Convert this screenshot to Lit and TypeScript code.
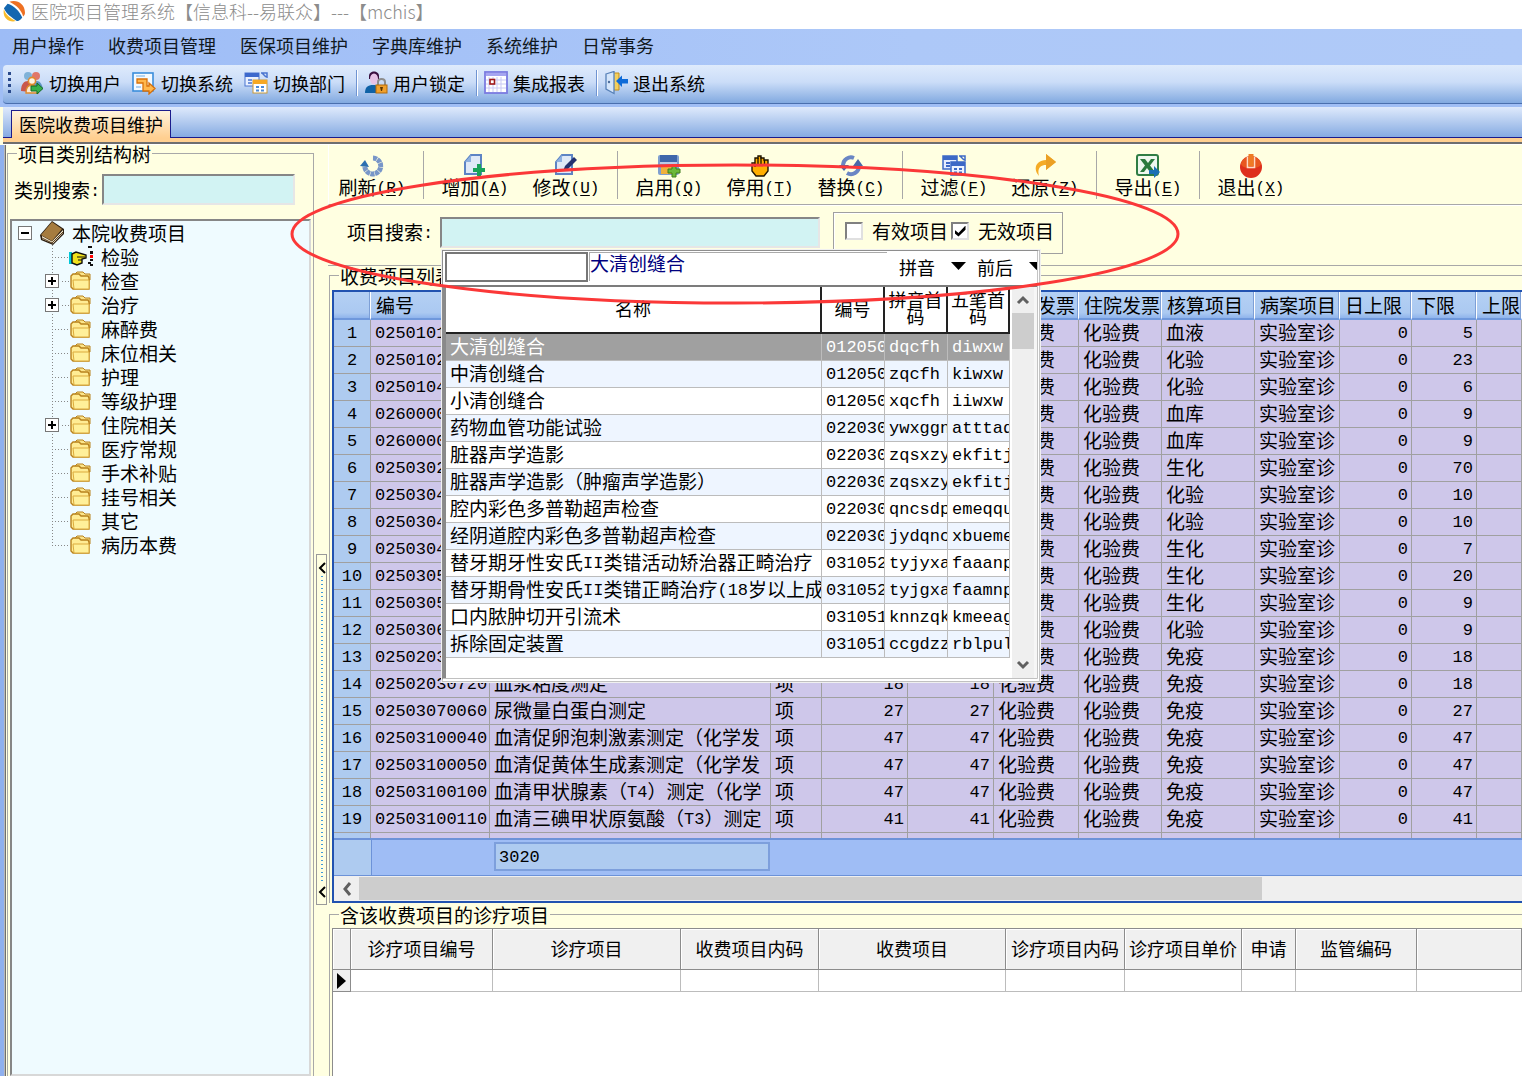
import { LitElement, html, css, svg, nothing } from "lit";
import { customElement, property } from "lit/decorators.js";

/* Wraps runs of half-width characters so they use the monospaced face. */
const mix = (text: string) =>
  text
    .split(/([\x21-\x7e]+)/)
    .filter((s) => s)
    .map((s) => (/^[\x21-\x7e]/.test(s) ? html`<span class="lat">${s}</span>` : s));

const ICONS: Record<string, unknown> = {
  switchUser: svg`<circle cx="8" cy="5" r="4" fill="#7fb2d8"/><circle cx="16" cy="5" r="4" fill="#e0776a"/>
    <path d="M1 20c0-7 3-10 7-10s5 3 5 6l-3 5z" fill="#c9574c"/><path d="M12 14c1-3 3-4 5-4 3 0 5 3 6 8l-6 1z" fill="#5f94c4"/>
    <circle cx="12" cy="10" r="3.6" fill="#fff3e0" stroke="#e08a2c" stroke-width="1.6"/>
    <path d="M6 22c0-5 2-8 6-8s5 3 6 8z" fill="#fbe9d4" stroke="#e08a2c" stroke-width="1.4"/>
    <path d="M11 15h6v-3l6 5.500-6 5.500v-3h-6z" fill="#37b04a" stroke="#136b25"/>`,
  switchSystem: svg`<rect x="1" y="2" width="20" height="18" fill="#f4faff" stroke="#3b8edb" stroke-width="1.6"/>
    <path d="M4 5h9M4 16h5" stroke="#9cc6ee" stroke-width="1.4"/>
    <path d="M5 8h10v7h2v-3l6 5.500-6 5.500v-3h-6v-8H5z" fill="#ffb84d" stroke="#d8700a" stroke-width="1.300"/>`,
  switchDept: svg`<rect x="1" y="2" width="14" height="13" fill="#e9f0ff" stroke="#4a74cf"/><rect x="1" y="2" width="14" height="4" fill="#3c68cc"/>
    <path d="M4 9h4M4 12h4" stroke="#4a74cf" stroke-width="1.500"/><path d="M17 2h6v5M18 2l4 4" stroke="#4a74cf" stroke-width="1.500" fill="none"/>
    <rect x="9" y="9" width="14" height="13" fill="#fff" stroke="#c99a3a"/><rect x="9" y="9" width="14" height="4" fill="#f6a823"/>
    <path d="M12 15h3v2h-3zM17 15h3v2h-3zM12 18.500h3v2h-3zM17 18.500h3v2h-3z" fill="#4a8ad8"/>`,
  lockUser: svg`<path d="M5 5c0-6 10-6 10 0v3H5z" fill="#3a1040"/><ellipse cx="10" cy="8" rx="4" ry="5.500" fill="#e6c2e6"/>
    <path d="M1 22c0-6 3-8 8-8s9 2 9 8z" fill="#0f62a6"/><path d="M14 14v-3c0-4 7-4 7 0v3" fill="none" stroke="#8d8d8d" stroke-width="2"/>
    <rect x="12" y="14" width="11" height="8" fill="#f0a02c" stroke="#b36b08"/><path d="M16 16h3l-1 4h-1z" fill="#5c3500"/>`,
  report: svg`<rect x="1" y="1" width="22" height="21" fill="#fff" stroke="#7b7be0" stroke-width="1.800"/><rect x="2" y="2" width="20" height="3" fill="#a5a5f0"/>
    <path d="M5 6v15M9 6v15M13 6v15M17 6v15M2 9h20M2 13h20M2 17h20" stroke="#c9c9f4"/><rect x="6" y="8.500" width="4.500" height="4.500" fill="#fff" stroke="#a01818" stroke-width="1.600"/>`,
  exitDoor: svg`<path d="M9 2h6v17H9z" fill="#f4cf5c" stroke="#c28e1c"/><path d="M2 3l8-2.500v22L2 18z" fill="#d4e5fa" stroke="#5781b8" stroke-width="1.300"/>
    <circle cx="5" cy="11" r="1.200" fill="#4d6d9c"/><path d="M12 10l6-5.500v3.500h6v4.500h-6V16z" fill="#0d6ad8"/>`,
  refresh: svg`<path d="M13 4a8 8 0 1 1-8 6" fill="none" stroke="#7896c8" stroke-width="5" stroke-dasharray="4 0.600"/><path d="M0 12l5-6 4 7z" fill="#2c6fb0"/>`,
  add: svg`<path d="M8 1h10v19H2V8z" fill="#dfe9f7" stroke="#5d84c4" stroke-width="2"/><path d="M8 1v7H2z" fill="#8db0e0"/><path d="M14 10h4v4h4v4h-4v4h-4v-4h-4v-4h4z" fill="#19a35a"/>`,
  edit: svg`<path d="M8 1h10v19H2V8z" fill="#dfe9f7" stroke="#5d84c4" stroke-width="2"/><path d="M8 1v7H2z" fill="#8db0e0"/><path d="M9 17l2-5L20 3l3 3-9 9z" fill="#24326e"/>`,
  enable: svg`<rect x="1" y="1" width="21" height="20" rx="2" fill="#7f9fd0"/><rect x="3" y="1" width="17" height="9" fill="#3f67aa"/><path d="M3 8h17v2H3z" fill="#b9cbe8"/><rect x="4" y="11" width="13" height="9" fill="#f0b13c"/>
    <path d="M15 11h4v4h4v4h-4v4h-4v-4h-4v-4h4z" fill="#6cb83a" stroke="#3f7f1d"/>`,
  hand: svg`<path d="M8 22L4 17V9h3v4V4h3V2h3v2h3v2h4v11l-4 5z" fill="#ffae00" stroke="#201400" stroke-width="1.400"/><path d="M10 4v8M13 3v9M16.500 6v6" stroke="#201400" stroke-width="1.300"/>`,
  replace: svg`<path d="M4 11a8 8 0 0 1 11-7M20 12a8 8 0 0 1-12 7" fill="none" stroke="#6a86c4" stroke-width="4"/><path d="M0 11h10l-5 6zM14 12h10l-5-7z" fill="#4b68a8"/>`,
  filter: svg`<rect x="1" y="2" width="14" height="13" fill="#e4edff" stroke="#3d69c6" stroke-width="1.500"/><rect x="1" y="2" width="14" height="4" fill="#3d69c6"/>
    <path d="M4 9h4M4 12h4" stroke="#3d69c6" stroke-width="2"/><path d="M17 2h6v5M18 2l4 4" stroke="#3d69c6" stroke-width="1.500" fill="none"/>
    <rect x="9" y="8" width="14" height="13" fill="#eef4ff" stroke="#3d69c6" stroke-width="1.500"/><rect x="9" y="8" width="14" height="4" fill="#3d69c6"/>
    <path d="M12 14h3v2h-3zM17 14h3v2h-3zM12 17.500h3v2h-3zM17 17.500h3v2h-3z" fill="#3d69c6"/>`,
  restore: svg`<path d="M6 22C-1 14 4 6 13 6V0l10 8-10 8v-5c-6 0-9 4-7 11z" fill="#f5ab26"/><path d="M13 0l10 8-10 8z" fill="#eba024"/>`,
  excel: svg`<rect x="1" y="1" width="21" height="20" rx="2" fill="#eef7ee" stroke="#2f7d44" stroke-width="2"/><path d="M4 5h5l3 4 3-4h4l-5 6.500 5 6.500h-5l-3-4-3 4H4l5-6.500z" fill="#2a7a3c"/>
    <path d="M13 16h5v-4l6 6-6 6v-4h-5z" fill="#1a6fb5"/>`,
  power: svg`<circle cx="12" cy="13" r="11" fill="#de2f1c"/><path d="M2 9a11 11 0 0 1 20 0c1 7-21 7-20 0z" fill="#e8561f"/><path d="M8.500 3v10.500h7V3" fill="none" stroke="#ffd9c4" stroke-width="1.600"/><rect x="9.500" y="0" width="5" height="12" fill="#ee7a24"/>`,
  folder: svg`<path d="M6 5l2-2h6l2 2h5v6H6z" fill="#fbe48a" stroke="#b8811c"/><path d="M2 7l2-2h6l2 2h7l1 2v11H4l-2-2z" fill="#ffec94" stroke="#b8811c" stroke-width="1.400"/><path d="M4 11h16v9H5z" fill="#fff09a" stroke="#dcab3c"/>`,
  book: svg`<path d="M0 14L12 0l12 8v5L13 24 1 19z" fill="#2a1d10"/><path d="M1 14L12 1l10 7-10 12z" fill="#a67c3f"/><path d="M2 15l10 5.500L23 9v3L13 22.500 2 18z" fill="#f6ead0"/><path d="M2 17l10 5L23 11" stroke="#5a4020" fill="none"/>`,
  point: svg`<path d="M0 7h3v12H0z" fill="#00c8d8"/><path d="M3 9l4-2 10 3v3l-4 1v4l-5 2-5-2z" fill="#f2e21c" stroke="#111" stroke-width="1.400"/><path d="M8 12h8M9 15h4" stroke="#111"/>
    <path d="M19 1h4v2h-4zM21 6h3v3h-3zM19 17h3v2h-3zM21 19h3v2h-3zM21 14h3v2h-3z" fill="#111"/><path d="M21 10h3v3h-3z" fill="#f00"/>`,
  brand: svg`<path d="M5 4C12 6 18 12 21 19c-2 3-4 4-6 4C10 19 4 16 1 9z" fill="#1467b0"/><path d="M7 2C15-1 24 4 24 14c0 2-1 3-2 4C20 11 15 6 7 2z" fill="#ee7022"/><path d="M1 10c2 6 6 9 13 13C6 25-1 19 1 10z" fill="#f7bb2c"/>`,
};

@customElement("app-icon")
class AppIcon extends LitElement {
  static styles = css`
    :host { display: block; flex: none; width: 24px; height: 24px; }
    .i { display: block; width: 100%; height: 100%; }
  `;
  @property() name = "";
  render() {
    return html`<svg class="i" viewBox="0 0 24 24" aria-hidden="true">${ICONS[this.name] ?? nothing}</svg>`;
  }
}

const MENUS = ["用户操作", "收费项目管理", "医保项目维护", "字典库维护", "系统维护", "日常事务"];

const TOOLS = [
  ["switchUser", "切换用户"], ["switchSystem", "切换系统"], ["switchDept", "切换部门"], null,
  ["lockUser", "用户锁定"], null, ["report", "集成报表"], null, ["exitDoor", "退出系统"],
] as (string[] | null)[];

const ACTIONS = [
  ["refresh", "刷新", "R"], null, ["add", "增加", "A"], ["edit", "修改", "U"], null,
  ["enable", "启用", "Q"], ["hand", "停用", "T"], ["replace", "替换", "C"], null,
  ["filter", "过滤", "F"], ["restore", "还原", "Z"], null, ["excel", "导出", "E"], null, ["power", "退出", "X"],
] as (string[] | null)[];

const TREE: [string, string, boolean][] = [
  ["检验", "point", false], ["检查", "folder", true], ["治疗", "folder", true], ["麻醉费", "folder", false],
  ["床位相关", "folder", false], ["护理", "folder", false], ["等级护理", "folder", false], ["住院相关", "folder", true],
  ["医疗常规", "folder", false], ["手术补贴", "folder", false], ["挂号相关", "folder", false], ["其它", "folder", false],
  ["病历本费", "folder", false],
];

/* code, name, accounting item, price */
const ITEMS: [string, string, string, string][] = [
  ["0250101", "", "血液", "5"], ["0250102", "", "化验", "23"], ["0250104", "", "化验", "6"],
  ["0260000", "", "血库", "9"], ["0260000", "", "血库", "9"], ["0250302", "", "生化", "70"],
  ["0250304", "", "化验", "10"], ["0250304", "", "化验", "10"], ["0250304", "", "生化", "7"],
  ["0250305", "", "生化", "20"], ["0250305", "", "生化", "9"], ["0250306", "", "化验", "9"],
  ["0250203", "", "免疫", "18"], ["02502030720", "血浆粘度测定", "免疫", "18"],
  ["02503070060", "尿微量白蛋白测定", "免疫", "27"],
  ["02503100040", "血清促卵泡刺激素测定（化学发", "免疫", "47"],
  ["02503100050", "血清促黄体生成素测定（化学发", "免疫", "47"],
  ["02503100100", "血清甲状腺素（T4）测定（化学", "免疫", "47"],
  ["02503100110", "血清三碘甲状原氨酸（T3）测定", "免疫", "41"],
];

const MATCHES = [
  ["大清创缝合", "012050", "dqcfh", "diwxw"], ["中清创缝合", "012050", "zqcfh", "kiwxw"],
  ["小清创缝合", "012050", "xqcfh", "iiwxw"], ["药物血管功能试验", "022030", "ywxggn", "atttad"],
  ["脏器声学造影", "022030", "zqsxzy", "ekfitj"], ["脏器声学造影（肿瘤声学造影）", "022030", "zqsxzy", "ekfitj"],
  ["腔内彩色多普勒超声检查", "022030", "qncsdp", "emeqqu"], ["经阴道腔内彩色多普勒超声检查", "022030", "jydqnc", "xbueme"],
  ["替牙期牙性安氏II类错活动矫治器正畸治疗", "031052", "tyjyxa", "faaanp"],
  ["替牙期骨性安氏II类错正畸治疗(18岁以上成", "031052", "tyjgxa", "faamnp"],
  ["口内脓肿切开引流术", "031051", "knnzqk", "kmeeag"], ["拆除固定装置", "031051", "ccgdzz", "rblpul"],
];

const DETAIL_HEADS = ["诊疗项目编号", "诊疗项目", "收费项目内码", "收费项目", "诊疗项目内码", "诊疗项目单价", "申请", "监管编码", ""];

@customElement("app-root")
class AppRoot extends LitElement {
  static styles = css`
    :host {
      display: flex; flex-direction: column; height: 100vh; overflow: hidden; position: relative;
      background: #ffffe1; color: #000;
      font: 19px/24px "Noto Sans CJK SC", sans-serif;
    }
    * { box-sizing: border-box; }
    .lat { font-family: "Liberation Mono", monospace; font-size: 17px; line-height: 0; vertical-align: 2px; }
    button, input, select { font: inherit; color: inherit; margin: 0; padding: 0; border: 0; border-radius: 0; background: none; }
    button { cursor: pointer; }
    ul { list-style: none; margin: 0; padding: 0; }
    table { border-collapse: separate; border-spacing: 0; table-layout: fixed; width: 100%; }
    th, td { padding: 0; font-weight: 400; overflow: hidden; white-space: nowrap; }

    .title { flex: none; display: flex; align-items: flex-start; gap: 6px; height: 29px; padding: 0 3px; background: #fff; color: #8c8c8c; font-size: 18px; line-height: 22px; font-weight: 300; margin: 0; }
    .title app-icon { width: 22px; height: 22px; }
    .menu { flex: none; display: flex; align-items: center; gap: 24px; height: 36px; padding: 0 12px 4px; background: linear-gradient(90deg, #9dbcf6, #adc8f8 60%, #b0caf8); font-size: 18px; }
    .menu a { color: #101820; text-decoration: none; }
    .strip { flex: none; background: #a0bef5; padding: 0 0 3px 3px; }
    .tools { display: flex; align-items: center; gap: 6px; height: 39px; padding: 0 0 2px 5px; border-radius: 4px 0 0 4px; border-bottom: 1px solid #4a6fae; background: linear-gradient(#dfebfc, #cbddf8 45%, #82a9e0); font-size: 18px; }
    .grip { width: 3px; height: 22px; margin-right: 3px; background: repeating-linear-gradient(#2a4a8c 0 3px, transparent 3px 6px); }
    .tool { display: flex; align-items: center; gap: 5px; padding-right: 5px; white-space: nowrap; line-height: 22px; }
    .bar { width: 2px; height: 26px; background: #6f94d2; border-right: 1px solid #fff; }
    .tabs { flex: none; display: flex; align-items: flex-end; height: 31px; padding-left: 8px; margin-left: 3px; background: linear-gradient(#dfeafc, #86abe2); border-bottom: 1px solid #1c1c8c; }
    .tab { height: 28px; padding: 0 7px; margin-bottom: -1px; border: 1px solid #1c1c8c; border-bottom: 0; background: linear-gradient(#fff3dc, #ffcf90); font-size: 18px; line-height: 27px; }
    .under { flex: none; height: 7px; margin-left: 3px; background: linear-gradient(#ffcf90 0 4px, #6e6e6e 4px 6px, #fff 6px); }

    .body { flex: 1; min-height: 0; display: flex; background: #ffffe1; }
    .edge { flex: none; width: 7px; background: linear-gradient(90deg, #8fb0ee 0 4px, #b8b8b8 4px 5px, #6e6e6e 5px 6px, #ffffe1 6px); }
    fieldset { margin: 0; padding: 0; min-width: 0; border: 1px solid #a8a8a8; }
    legend { padding: 0 1px; margin-left: 9px; line-height: 17px; }
    .left { flex: none; width: 307px; display: flex; }
    .left fieldset { flex: 1; display: flex; flex-direction: column; border-bottom: 0; }
    .leftbody { display: flex; flex-direction: column; height: 100%; padding: 0 2px; }
    .find { display: flex; align-items: center; gap: 2px; height: 57px; padding: 0 16px 2px 4px; white-space: nowrap; }
    .box { background: #d2f3f3; border: 2px solid; border-color: #868686 #e6e6e6 #e6e6e6 #868686; height: 31px; min-width: 0; outline: 0; }
    .find .box { flex: 1; }
    .tree { flex: 1; background: #effbff; border: 2px solid; border-color: #868686 #d8d8d8 #d8d8d8 #868686; padding: 0 0 0 6px; line-height: 22px; }
    .node { display: flex; align-items: center; height: 24px; gap: 8px; }
    .kids { margin-left: 34px; background: repeating-linear-gradient(#888 0 1px, transparent 1px 3px) 0 0 / 1px calc(100% - 12px) no-repeat; }
    .kids .lead { width: 17px; height: 1px; margin-right: -8px; background: repeating-linear-gradient(90deg, #888 0 1px, transparent 1px 3px); }
    .kids .toggle { margin: 0 -5px 0 -7px; }
    .kids .toggle + .lead { width: 7px; }
    .toggle { flex: none; width: 14px; height: 14px; border: 1px solid #777; background: linear-gradient(#000, #000) 50% 50% / 8px 2px no-repeat, #fff; }
    .toggle.plus { background: linear-gradient(#000, #000) 50% 50% / 8px 2px no-repeat, linear-gradient(#000, #000) 50% 50% / 2px 8px no-repeat, #fff; }

    .split { flex: none; width: 14px; display: flex; flex-direction: column; align-items: center; justify-content: flex-end; padding: 0 1px 171px 2px; }
    .handle { width: 11px; height: 351px; display: flex; flex-direction: column; align-items: center; justify-content: space-between; padding: 7px 0 6px; border: 1px solid #9a9a9a; }
    .handle svg { display: block; flex: none; width: 8px; height: 12px; }
    .dots { flex: 1; width: 2px; margin: 2px 0; background: repeating-linear-gradient(#3f9adb 0 1px, transparent 1px 4px); }

    .right { flex: 1; min-width: 0; display: flex; flex-direction: column; }
    .actions { flex: none; display: flex; align-items: center; gap: 5px; height: 60px; border-bottom: 1px solid #a8a8a8; border-left: 1px solid #fff; box-shadow: 0 1px #fff; }
    .action { display: flex; flex-direction: column; align-items: center; width: 86px; white-space: nowrap; line-height: 18px; }
    .action .lat { font-size: 16px; }
    .action u { text-underline-offset: 2px; }
    .rule { width: 7px; height: 48px; background: linear-gradient(#a8a8a8, #a8a8a8) 50% 0 / 1px 100% no-repeat; }
    .query { flex: none; position: relative; display: flex; align-items: flex-start; height: 61px; padding: 7px 0 0 19px; border-bottom: 1px solid #a8a8a8; }
    .query > label { line-height: 40px; width: 93px; white-space: nowrap; }
    .combo { position: relative; flex: none; width: 380px; padding-top: 5px; }
    .combo > .box { width: 100%; }
    .flags { display: flex; align-items: center; gap: 3px; height: 42px; margin-left: 13px; padding: 0 8px 4px 11px; border: 1px solid #a0a0a0; box-shadow: inset 1px 1px #fff; white-space: nowrap; }
    .flags label { display: flex; align-items: center; gap: 9px; }
    .check { appearance: none; width: 18px; height: 18px; background: #fff; border: 2px solid; border-color: #808080 #e0e0e0 #e0e0e0 #808080; display: grid; place-items: center; }
    .check:checked::before { content: ""; width: 11px; height: 11px; background: #000; clip-path: polygon(0 38%, 36% 68%, 100% 0, 100% 38%, 36% 100%, 0 70%); }
    .ring { position: absolute; z-index: 5; left: -38px; top: -42px; width: 890px; height: 142px; pointer-events: none; }

    .popup { position: absolute; z-index: 3; left: 2px; top: 38px; width: 598px; height: 432px; display: flex; flex-direction: column; background: #fff; border: 1px solid #8e8e8e; border-right: 3px double #c4c4c4; border-bottom: 4px double #c0c0c0; outline: 1px solid #f0f0f0; }
    .pick { flex: none; display: flex; height: 36px; padding: 1px 0 4px 2px; border-bottom: 2px solid #7c7c7c; overflow: hidden; }
    .pick input { flex: none; width: 143px; height: 30px; border: 2px solid #777; background: #fff; }
    .pick output { flex: none; width: 298px; margin: 0 12px 0 1px; color: #00007e; line-height: 20px; border: 1px solid #aaa; border-width: 1px 0 0 1px; }
    .drop { position: relative; flex: none; width: 78px; height: 30px; font-size: 18px; }
    .drop select { width: 100%; height: 100%; appearance: none; outline: 0; }
    .drop svg { position: absolute; right: 11px; top: 10px; width: 15px; height: 8px; pointer-events: none; }
    .list { flex: 1; min-height: 0; display: flex; overflow: hidden; border-left: 3px solid #8a8a8a; }
    .listbody { flex: 1; min-width: 0; }
    .list th { height: 47px; padding-bottom: 3px; font-size: 18px; line-height: 17px; white-space: normal; border: 1px solid #222; border-width: 0 2px 2px 0; }
    .list td { height: 27px; line-height: 24px; padding: 0 0 2px 4px; border-right: 1px solid #bcbcbc; border-bottom: 1px solid #bcbcbc; }
    .list tr:nth-child(even) td { background: #eef5ff; }
    .list tr.on td { background: #a0a0a0; color: #fff; }
    .vscroll { flex: none; width: 27px; background: #efefef; display: flex; flex-direction: column; align-items: center; border-left: 2px solid #fff; border-right: 3px solid #f6f6f6; }
    .vscroll svg { flex: none; width: 14px; height: 10px; margin: 8px 0 8px; }
    .vscroll .thumb { width: 22px; height: 36px; background: #cdcdcd; margin-bottom: auto; }

    .group { flex: none; margin: 1px 0 0 1px; border-right: 0; border-bottom: 0; }
    .grid { margin: 6px 0 0 2px; border: 2px solid #2152b0; border-right: 0; background: #9fbdf5; }
    .view { height: 546px; overflow: hidden; }
    .grid th { height: 28px; line-height: 25px; text-align: left; padding: 0 0 1px 5px; background: linear-gradient(#b4d0f4, #abc9f1 80%, #8fb4ec); border-bottom: 2px solid #6f98dc; border-right: 1px solid #fff; box-shadow: inset -1px 0 #7d9fd6; }
    .grid td { height: 27px; line-height: 24px; padding: 0 4px 2px; background: #cec7ea; border: 1px solid #a0a0a0; border-width: 0 1px 1px 0; }
    .grid .view td:first-child { background: #aecbf0; text-align: center; }
    .grid .view td.num { text-align: right; padding-right: 3px; }
    .sum { display: flex; height: 38px; border-top: 2px solid #6c92d8; border-bottom: 1px solid #6c92d8; }
    .sum .head { width: 38px; background: #aecbf0; border-right: 1px solid #6c92d8; }
    .sum output { width: 276px; height: 29px; margin: 2px 0 0 122px; padding-left: 3px; line-height: 23px; background: #aecbf0; border: 2px solid #7d9fdc; }
    .hscroll { display: flex; align-items: center; height: 25px; background: #efefef; }
    .hscroll svg { flex: none; width: 10px; height: 14px; margin: 0 7px 0 8px; }
    .hscroll .thumb { width: 76%; height: 23px; background: #cdcdcd; }

    .detail { flex: 1; margin-top: 3px; }
    .sheet { height: 100%; margin: 5px 0 0 2px; background: #fff; border: 1px solid #8c8c8c; border-right: 0; font-size: 18px; }
    .sheet th { height: 41px; padding-bottom: 2px; background: #f0f0f0; border: 1px solid #8c8c8c; border-width: 0 1px 1px 0; box-shadow: inset 1px 1px #fff; }
    .sheet td { height: 22px; border: 1px solid #bcbcbc; border-width: 0 1px 1px 0; }
    .sheet td:first-child { background: #f0f0f0; border-color: #8c8c8c; }
    .sheet td svg { display: block; width: 9px; height: 16px; margin: 0 auto; }
  `;

  private left = svg`<path d="M8 1L3 7l5 6" fill="none" stroke="#606060" stroke-width="3"/>`;

  private popup() {
    return html`<div class="popup">
      <div class="pick">
        <input aria-label="检索码" />
        <output>大清创缝合</output>
        <div class="drop"><select aria-label="检索方式"><option>拼音</option></select>
          <svg viewBox="0 0 15 8"><path d="M0 0h15L7.500 8z" /></svg></div>
        <div class="drop"><select aria-label="匹配方式"><option>前后</option></select>
          <svg viewBox="0 0 15 8"><path d="M0 0h15L7.500 8z" /></svg></div>
      </div>
      <div class="list">
        <div class="listbody"><table>
          <colgroup><col /><col width="63" /><col width="63" /><col width="62" /></colgroup>
          <thead><tr><th>名称</th><th>编号</th><th>拼音首码</th><th>五笔首码</th></tr></thead>
          <tbody>${MATCHES.map((r, i) => html`<tr class=${i ? "" : "on"}>${r.map((c) => html`<td>${mix(c)}</td>`)}</tr>`)}</tbody>
        </table></div>
        <div class="vscroll">
          <svg viewBox="0 0 14 10"><path d="M2 8l5-5 5 5" fill="none" stroke="#606060" stroke-width="3" /></svg>
          <div class="thumb"></div>
          <svg viewBox="0 0 14 10"><path d="M2 2l5 5 5-5" fill="none" stroke="#606060" stroke-width="3" /></svg>
        </div>
      </div>
    </div>`;
  }

  private row(r: [string, string, string, string], i: number) {
    const shown = r[1] !== "";
    return html`<tr>
      <td>${mix(String(i + 1))}</td><td>${mix(r[0])}</td><td>${mix(r[1])}</td><td>${shown ? "项" : ""}</td>
      <td class="num">${shown ? mix(r[3]) : ""}</td><td class="num">${shown ? mix(r[3]) : ""}</td>
      <td>化验费</td><td>化验费</td><td>${r[2]}</td><td>实验室诊</td>
      <td class="num">${mix("0")}</td><td class="num">${mix(r[3])}</td><td></td>
    </tr>`;
  }

  render() {
    return html`
      <h1 class="title"><app-icon name="brand"></app-icon>医院项目管理系统【信息科--易联众】---【mchis】</h1>
      <nav class="menu">${MENUS.map((m) => html`<a href="#">${m}</a>`)}</nav>
      <div class="strip"><div class="tools"><span class="grip"></span>
        ${TOOLS.map((t) => t ? html`<button class="tool"><app-icon name=${t[0]}></app-icon>${t[1]}</button>` : html`<span class="bar"></span>`)}
      </div></div>
      <div class="tabs"><button class="tab">医院收费项目维护</button></div>
      <div class="under"></div>
      <main class="body">
        <div class="edge"></div>
        <div class="left"><fieldset><legend>项目类别结构树</legend>
          <div class="leftbody">
            <div class="find"><label for="cat">类别搜索${mix(":")}</label><input id="cat" class="box" /></div>
            <div class="tree">
              <div class="node"><span class="toggle"></span><app-icon name="book"></app-icon>本院收费项目</div>
              <ul class="kids">${TREE.map(([t, icon, plus]) => html`<li class="node">
                ${plus ? html`<span class="toggle plus"></span>` : nothing}<span class="lead"></span><app-icon name=${icon}></app-icon>${t}</li>`)}</ul>
            </div>
          </div>
        </fieldset></div>
        <div class="split"><div class="handle">
          <svg viewBox="0 0 8 12"><path d="M7 1L2 6l5 5" fill="none" stroke="#000" stroke-width="2" /></svg>
          <span class="dots"></span>
          <svg viewBox="0 0 8 12"><path d="M7 1L2 6l5 5" fill="none" stroke="#000" stroke-width="2" /></svg>
        </div></div>
        <div class="right">
          <div class="actions">${ACTIONS.map((a) => a
            ? html`<button class="action"><app-icon name=${a[0]}></app-icon><span>${a[1]}<span class="lat">(<u>${a[2]}</u>)</span></span></button>`
            : html`<span class="rule"></span>`)}</div>
          <div class="query">
            <label for="item">项目搜索${mix(":")}</label>
            <div class="combo"><input id="item" class="box" />${this.popup()}</div>
            <div class="flags">
              <label><input class="check" type="checkbox" />有效项目</label>
              <label><input class="check" type="checkbox" checked />无效项目</label>
            </div>
            <svg class="ring" viewBox="0 0 890 142"><ellipse cx="445" cy="71" rx="443" ry="69" fill="none" stroke="#fb3838" stroke-width="3" /></svg>
          </div>
          <fieldset class="group"><legend>收费项目列表</legend>
            <div class="grid">
              <div class="view"><table>
                <colgroup>${[37, 119, 281, 51, 86, 86, 85, 83, 93, 85, 72, 65].map((w) => html`<col width=${w} />`)}<col /></colgroup>
                <thead><tr><th></th><th>编号</th><th></th><th></th><th></th><th></th><th>门诊发票</th><th>住院发票</th><th>核算项目</th><th>病案项目</th><th>日上限</th><th>下限</th><th>上限</th></tr></thead>
                <tbody>${ITEMS.map((r, i) => this.row(r, i))}
                  <tr>${Array.from({ length: 13 }, () => html`<td></td>`)}</tr></tbody>
              </table></div>
              <div class="sum"><span class="head"></span><output>${mix("3020")}</output></div>
              <div class="hscroll"><svg viewBox="0 0 10 14">${this.left}</svg><div class="thumb"></div></div>
            </div>
          </fieldset>
          <fieldset class="group detail"><legend>含该收费项目的诊疗项目</legend>
            <div class="sheet"><table>
              <colgroup>${[18, 142, 188, 138, 187, 119, 117, 54, 121].map((w) => html`<col width=${w} />`)}<col /></colgroup>
              <thead><tr><th></th>${DETAIL_HEADS.map((h) => html`<th>${h}</th>`)}</tr></thead>
              <tbody><tr><td><svg viewBox="0 0 9 16"><path d="M0 0l9 8-9 8z" /></svg></td>${DETAIL_HEADS.map(() => html`<td></td>`)}</tr></tbody>
            </table></div>
          </fieldset>
        </div>
      </main>`;
  }
}
